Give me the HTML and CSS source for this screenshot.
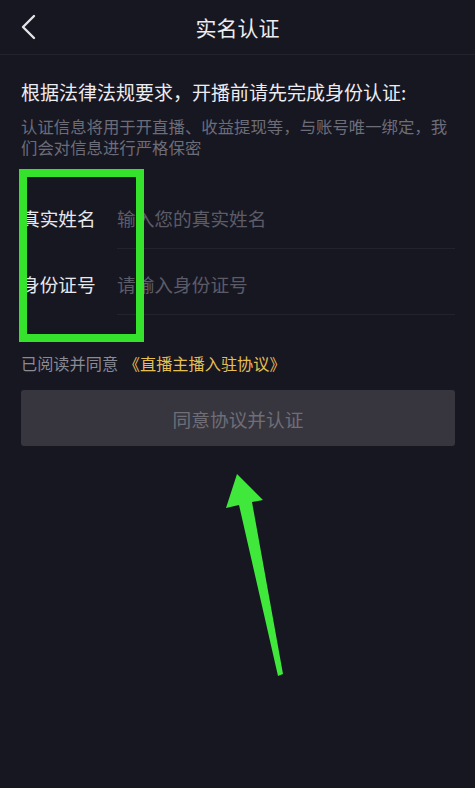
FILE: index.html
```html
<!DOCTYPE html>
<html lang="zh-CN">
<head>
<meta charset="utf-8">
<title>实名认证</title>
<link rel="stylesheet" href="styles.css">
</head>
<body>
<div class="page">
  <header class="navbar">
    <svg class="back" width="20" height="28" viewBox="0 0 20 28" aria-hidden="true">
      <polyline points="14,3 3,14 14,25" fill="none" stroke="#e4e4e8" stroke-width="2.4" stroke-linecap="round" stroke-linejoin="round"/>
    </svg>
    <h1 class="title">实名认证</h1>
  </header>

  <main class="content">
    <p class="lead">根据法律法规要求，开播前请先完成身份认证:</p>
    <p class="note">认证信息将用于开直播、收益提现等，与账号唯一绑定，我们会对信息进行严格保密</p>

    <div class="form">
      <div class="row">
        <span class="label">真实姓名</span>
        <span class="field">输入您的真实姓名</span>
      </div>
      <div class="row">
        <span class="label">身份证号</span>
        <span class="field">请输入身份证号</span>
      </div>
    </div>

    <p class="agree">已阅读并同意 <span class="link">《直播主播入驻协议》</span></p>

    <button class="submit" type="button">同意协议并认证</button>
  </main>

  <div class="highlight"></div>
  <svg class="arrow" width="475" height="788" viewBox="0 0 475 788" aria-hidden="true">
    <polygon points="237,474 263,500 252,502 283,674 278,676 239,505 226,508" fill="#3fe83a"/>
  </svg>
</div>
</body>
</html>
```

FILE: styles.css
```css
* { box-sizing: border-box; }

html, body {
  margin: 0;
  padding: 0;
  background: #171722;
}

body {
  font-family: "Noto Sans CJK SC", "Noto Sans", sans-serif;
  color: #e8e8ec;
}

.page {
  position: relative;
  width: 475px;
  height: 788px;
  overflow: hidden;
  background: #171722;
}

.navbar {
  position: relative;
  height: 55px;
  display: flex;
  align-items: center;
  justify-content: center;
  border-bottom: 1px solid #23232e;
}

.back {
  position: absolute;
  left: 20px;
  top: 13px;
}

.title {
  margin: 0;
  font-size: 21px;
  font-weight: 400;
  line-height: 28px;
  color: #ececf0;
  margin-top: -1px;
}

.content {
  padding: 0 20px 0 21px;
}

.lead {
  margin: 24px 0 0;
  font-size: 19px;
  line-height: 26px;
  color: #ececf0;
  white-space: nowrap;
}

.note {
  margin: 11px 0 0;
  font-size: 16.4px;
  line-height: 21px;
  color: #6c6d78;
}

.form {
  margin-top: 25px;
}

.row {
  display: flex;
  height: 66px;
}

.label {
  width: 96px;
  flex: none;
  display: flex;
  align-items: center;
  padding-top: 3px;
  font-size: 18.7px;
  color: #e8e8ec;
}

.field {
  flex: 1;
  display: flex;
  align-items: center;
  padding-top: 3px;
  font-size: 18.7px;
  color: #5b5c67;
  border-bottom: 1px solid #23232e;
}

.agree {
  margin: 37px 0 0;
  font-size: 16.2px;
  line-height: 22px;
  color: #8a8a93;
}

.link {
  color: #e6bf52;
  margin-left: 2px;
}

.submit {
  display: block;
  width: 100%;
  height: 56px;
  margin-top: 16px;
  border: 0;
  border-radius: 3px;
  background: #37363f;
  color: #6f6e77;
  font-family: inherit;
  font-size: 18.7px;
  padding: 0;
}

.highlight {
  position: absolute;
  left: 19px;
  top: 169px;
  width: 125px;
  height: 173px;
  border: 8px solid #35e22c;
}

.arrow {
  position: absolute;
  left: 0;
  top: 0;
  pointer-events: none;
}
```
